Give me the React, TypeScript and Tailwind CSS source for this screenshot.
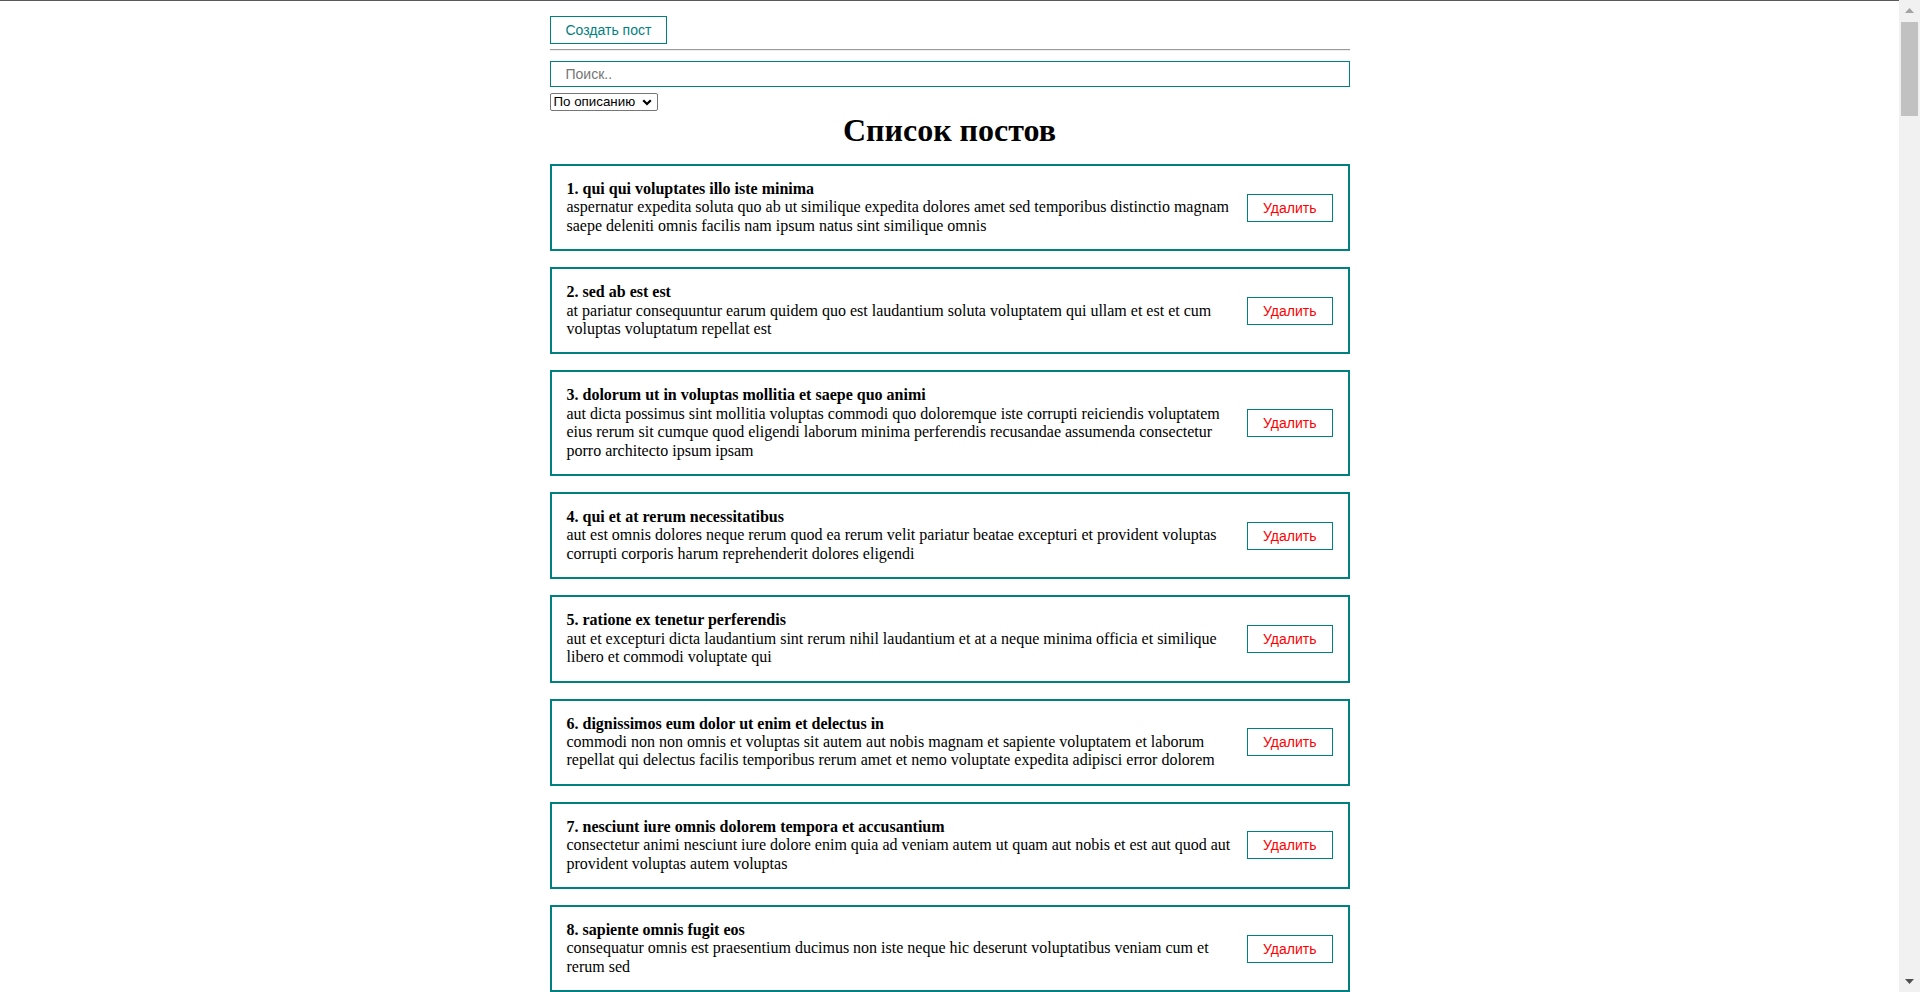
import React, { useMemo, useState } from 'react';

type Post = {
  id: number;
  title: string;
  body: string;
};

const firstPosts: Omit<Post, 'id'>[] = [
  {
    title: 'qui qui voluptates illo iste minima',
    body: 'aspernatur expedita soluta quo ab ut similique expedita dolores amet sed temporibus distinctio magnam saepe deleniti omnis facilis nam ipsum natus sint similique omnis',
  },
  {
    title: 'sed ab est est',
    body: 'at pariatur consequuntur earum quidem quo est laudantium soluta voluptatem qui ullam et est et cum voluptas voluptatum repellat est',
  },
  {
    title: 'dolorum ut in voluptas mollitia et saepe quo animi',
    body: 'aut dicta possimus sint mollitia voluptas commodi quo doloremque iste corrupti reiciendis voluptatem eius rerum sit cumque quod eligendi laborum minima perferendis recusandae assumenda consectetur porro architecto ipsum ipsam',
  },
  {
    title: 'qui et at rerum necessitatibus',
    body: 'aut est omnis dolores neque rerum quod ea rerum velit pariatur beatae excepturi et provident voluptas corrupti corporis harum reprehenderit dolores eligendi',
  },
  {
    title: 'ratione ex tenetur perferendis',
    body: 'aut et excepturi dicta laudantium sint rerum nihil laudantium et at a neque minima officia et similique libero et commodi voluptate qui',
  },
  {
    title: 'dignissimos eum dolor ut enim et delectus in',
    body: 'commodi non non omnis et voluptas sit autem aut nobis magnam et sapiente voluptatem et laborum repellat qui delectus facilis temporibus rerum amet et nemo voluptate expedita adipisci error dolorem',
  },
  {
    title: 'nesciunt iure omnis dolorem tempora et accusantium',
    body: 'consectetur animi nesciunt iure dolore enim quia ad veniam autem ut quam aut nobis et est aut quod aut provident voluptas autem voluptas',
  },
  {
    title: 'sapiente omnis fugit eos',
    body: 'consequatur omnis est praesentium ducimus non iste neque hic deserunt voluptatibus veniam cum et rerum sed',
  },
];

const morePosts: Omit<Post, 'id'>[] = [
  {
    title: 'sunt aut facere repellat provident occaecati excepturi optio reprehenderit',
    body: 'quia et suscipit suscipit recusandae consequuntur expedita et cum reprehenderit molestiae ut ut quas totam nostrum rerum est autem sunt rem eveniet architecto',
  },
  {
    title: 'qui est esse',
    body: 'est rerum tempore vitae sequi sint nihil reprehenderit dolor beatae ea dolores neque fugiat blanditiis voluptate porro vel nihil molestiae ut reiciendis qui aperiam non debitis possimus qui neque nisi nulla',
  },
  {
    title: 'ea molestias quasi exercitationem repellat qui ipsa sit aut',
    body: 'et iusto sed quo iure voluptatem occaecati omnis eligendi aut ad voluptatem doloribus vel accusantium quis pariatur molestiae porro eius odio et labore et velit aut',
  },
  {
    title: 'eum et est occaecati',
    body: 'ullam et saepe reiciendis voluptatem adipisci sit amet autem assumenda provident rerum culpa quis hic commodi nesciunt rem tenetur doloremque ipsam iure quis sunt voluptatem rerum illo velit',
  },
  {
    title: 'nesciunt quas odio',
    body: 'repudiandae veniam quaerat sunt sed alias aut fugiat sit autem sed est voluptatem omnis possimus esse voluptatibus quis est aut tenetur dolor neque',
  },
  {
    title: 'dolorem eum magni eos aperiam quia',
    body: 'ut aspernatur corporis harum nihil quis provident sequi mollitia nobis aliquid molestiae perspiciatis et ea nemo ab reprehenderit accusantium quas voluptate dolores velit et doloremque molestiae',
  },
  {
    title: 'magnam facilis autem',
    body: 'dolore placeat quibusdam ea quo vitae magni quis enim qui quis quo nemo aut saepe quidem repellat excepturi ut quia sunt ut sequi eos ea sed quas',
  },
  {
    title: 'dolorem dolore est ipsam',
    body: 'dignissimos aperiam dolorem qui eum facilis quibusdam animi sint suscipit qui sint possimus cum quaerat magni maiores excepturi ipsam ut commodi dolor voluptatum modi aut vitae',
  },
  {
    title: 'optio molestias id quia eum',
    body: 'quo et expedita modi cum officia vel magni doloribus qui repudiandae vero nisi sit quos veniam quod sed accusamus veritatis error',
  },
];

// 100 posts in total, like the API returns
const initialPosts: Post[] = [
  ...firstPosts,
  ...Array.from({ length: 92 }, (_, i) => morePosts[i % morePosts.length]),
].map((p, i) => ({ ...p, id: i + 1 }));

const PostItem: React.FC<{ post: Post; number: number; onRemove: (id: number) => void }> = ({
  post,
  number,
  onRemove,
}) => (
  <div className="flex items-center border-2 border-[#008080] px-[15px] py-[14px] mb-[16px] leading-[18.4px]">
    <div className="flex-1 mr-[10px]">
      <strong className="font-bold">
        {number}. {post.title}
      </strong>
      <div>{post.body}</div>
    </div>
    <button
      onClick={() => onRemove(post.id)}
      className="shrink-0 border border-[#008080] px-[15px] py-[5px] text-[14px] leading-[16px] text-[#ff0000] font-['Liberation_Sans',Arial,sans-serif] cursor-pointer"
    >
      Удалить
    </button>
  </div>
);

// Windows-style page scrollbar (the browser's own is hidden here)
const ScrollRail: React.FC = () => (
  <div className="w-[21px] shrink-0 flex flex-col bg-[#f1f1f1]">
    <div className="h-[21px] flex items-center justify-center">
      <svg width="9" height="5" viewBox="0 0 9 5">
        <path d="M0 5 4.5 0 9 5Z" fill="#a3a3a3" />
      </svg>
    </div>
    <div className="flex-1 pt-[1px] px-[2px]">
      <div className="h-[94px] bg-[#c1c1c1]" />
    </div>
    <div className="h-[21px] flex items-center justify-center">
      <svg width="9" height="5" viewBox="0 0 9 5">
        <path d="M0 0 4.5 5 9 0Z" fill="#505050" />
      </svg>
    </div>
  </div>
);

export default function App() {
  const [posts, setPosts] = useState<Post[]>(initialPosts);
  const [query, setQuery] = useState('');
  const [sort, setSort] = useState<'title' | 'body'>('body');

  const sortedAndSearched = useMemo(() => {
    const sorted = [...posts].sort((a, b) => a[sort].localeCompare(b[sort]));
    return sorted.filter(p => p.title.toLowerCase().includes(query.toLowerCase()));
  }, [posts, query, sort]);

  const removePost = (id: number) => {
    setPosts(prev => prev.filter(p => p.id !== id));
  };

  return (
    <div className="h-screen flex bg-white">
      <div className="flex-1 overflow-y-auto border-t border-[#5a5a5a] font-['Liberation_Serif','Times_New_Roman',serif] text-[16px] leading-[normal] text-black">
        <div className="w-[800px] mx-auto">
          <button className="mt-[15px] border border-[#008080] px-[15px] py-[5px] text-[14px] leading-[16px] text-[#008080] font-['Liberation_Sans',Arial,sans-serif] cursor-pointer">
            Создать пост
          </button>

          <hr className="mt-[5px] border-t border-t-[#9a9a9a] border-b border-b-[#eeeeee]" />

          <input
            value={query}
            onChange={e => setQuery(e.target.value)}
            placeholder="Поиск.."
            className="block mt-[10px] w-full h-[26px] border border-[#008080] px-[15px] text-[14px] font-['Liberation_Sans',Arial,sans-serif] placeholder:text-[#757575] outline-none"
          />

          <div className="relative mt-[6px] w-[108px]">
            <select
              value={sort}
              onChange={e => setSort(e.target.value as 'title' | 'body')}
              className="block w-full h-[18px] appearance-none border border-[#767676] rounded-[2px] pl-[3px] pr-[20px] text-[13.33px] leading-[16px] font-['Liberation_Sans',Arial,sans-serif] text-black bg-white"
            >
              <option disabled value="">
                Сортировка по
              </option>
              <option value="title">По названию</option>
              <option value="body">По описанию</option>
            </select>
            <svg
              className="pointer-events-none absolute right-[6px] top-[6px]"
              width="10"
              height="7"
              viewBox="0 0 10 7"
              fill="none"
            >
              <path d="M1.2 1.2 5 5 8.8 1.2" stroke="#000" strokeWidth="2.2" />
            </svg>
          </div>

          <h1 className="mt-[1px] mb-[15px] text-center text-[32px] leading-[37px] font-bold">Список постов</h1>

          {sortedAndSearched.map((post, index) => (
            <PostItem key={post.id} post={post} number={index + 1} onRemove={removePost} />
          ))}
        </div>
      </div>
      <ScrollRail />
    </div>
  );
}
